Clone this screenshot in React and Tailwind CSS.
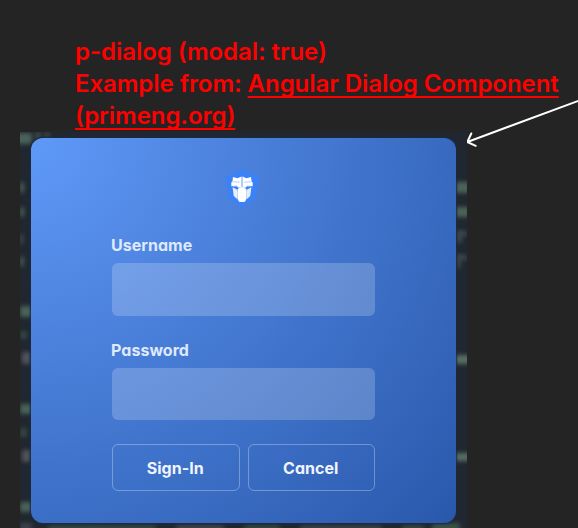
const LEFT_SPOTS = [
  { x: 0, y: 50, w: 4, h: 11, color: '#4b6259' },
  { x: 0, y: 75, w: 4, h: 10, color: '#4b6259' },
  { x: 0, y: 102, w: 3, h: 10, color: '#40544e' },
  { x: 0, y: 124, w: 4, h: 11, color: '#445a52' },
  { x: 0, y: 174, w: 13, h: 11, color: '#4a6258' },
  { x: 0, y: 199, w: 7, h: 8, color: '#344742' },
  { x: 2, y: 220, w: 9, h: 12, color: '#50535c' },
  { x: 0, y: 272, w: 13, h: 10, color: '#4a6258' },
  { x: 0, y: 296, w: 7, h: 9, color: '#344742' },
  { x: 2, y: 318, w: 9, h: 12, color: '#50535c' },
  { x: 0, y: 370, w: 13, h: 10, color: '#4a6258' },
];

const RIGHT_SPOTS = [
  { x: 434, y: 50, w: 16, h: 11, color: '#4b6259' },
  { x: 434, y: 75, w: 16, h: 10, color: '#4b6259' },
  { x: 436, y: 99, w: 6, h: 12, color: '#384a46' },
  { x: 436, y: 99, w: 12, h: 5, color: '#3c464f' },
  { x: 436, y: 123, w: 5, h: 13, color: '#384a46' },
  { x: 436, y: 123, w: 12, h: 5, color: '#3c464f' },
  { x: 432, y: 223, w: 20, h: 9, color: '#566e63' },
  { x: 432, y: 321, w: 20, h: 8, color: '#566e63' },
];

const EDGE_SPOTS = [
  { x: -4, y: 1, w: 16, h: 11, color: '#4b6259' },
  { x: 15, y: 0, w: 6, h: 7, color: '#3d5049' },
  { x: 24, y: 0, w: 6, h: 7, color: '#3a4448' },
  { x: 0, y: 391, w: 12, h: 8, color: '#3a424b' },
  { x: 28, y: 393, w: 108, h: 7, color: '#344841' },
  { x: 156, y: 393, w: 48, h: 7, color: '#41454e' },
  { x: 224, y: 393, w: 36, h: 7, color: '#344841' },
  { x: 280, y: 393, w: 82, h: 7, color: '#3b4049' },
  { x: 382, y: 393, w: 22, h: 7, color: '#344841' },
  { x: 412, y: 391, w: 28, h: 8, color: '#3c5249' },
];

const SPOTS = [...LEFT_SPOTS, ...RIGHT_SPOTS, ...EDGE_SPOTS];

// Out-of-focus page content behind the modal mask.
function Backdrop() {
  return (
    <div aria-hidden="true" className="absolute inset-0 overflow-hidden">
      {SPOTS.map((s, i) => (
        <span
          key={i}
          className="absolute rounded-xs blur-[2px]"
          style={{ left: s.x, top: s.y, width: s.w, height: s.h, background: s.color }}
        />
      ))}
    </div>
  );
}

function Logo() {
  return (
    <svg className="mr-auto ml-[113px] block h-[39px] w-[36px]" viewBox="0 0 36 39">
      <path d="M17 0.5 34 8 30.5 29.5 17 38.5 3.5 29.5 0.5 8Z" fill="#3b82f6" />
      <path d="M8 8 12.5 9.3 16.6 7.5V18.5L13.5 18.8 11.5 16.8 6.3 17.2V13.5L7.4 12.5Z" fill="#fff" />
      <path d="M26 8 21.5 9.3 17.4 7.5V18.5L20.5 18.8 22.5 16.8 27.7 17.2V13.5L26.6 12.5Z" fill="#fff" />
      <path d="M7.6 18.3 11.8 20.5 12.6 23V30.5L8.8 27Z" fill="#e6effe" />
      <path d="M26.4 18.3 22.2 20.5 21.4 23V30.5L25.2 27Z" fill="#e6effe" />
      <path d="M14 19 17 18 20 19 21.6 20.5 21 31 19.6 33H14.4L13 31 12.4 20.5Z" fill="#fff" />
      <path d="M7.5 12.8 14.8 13.2M26.5 12.8 19.2 13.2M8 17.2 11.6 17.6M26 17.2 22.4 17.6" stroke="#9fc3fc" strokeWidth="0.8" />
    </svg>
  );
}

function Field({ label, type }) {
  return (
    <label className="block">
      <span className="-ml-px block h-[25px] text-base leading-[15px] font-bold tracking-[0.04px] text-[#dfe9fc]">{label}</span>
      <input type={type} className="block h-[52.5px] w-full rounded-md bg-white/20 outline-none" />
    </label>
  );
}

function Button({ children }) {
  return (
    <button className="h-[47px] flex-1 rounded-md border border-white/30 pt-px pr-px text-base leading-none font-bold tracking-[0.05px] text-[#eff4fd]">
      {children}
    </button>
  );
}

export default function App() {
  return (
    <main className="relative flex h-[528px] w-[578px] flex-col overflow-hidden bg-[#242424] font-['Inter',sans-serif]">
      <header className="h-[132px] shrink-0 pt-9 pl-[75px] text-[24px] leading-[32px] font-semibold tracking-[-0.05px] whitespace-nowrap text-[#ff0000]">
        <p>p-dialog (modal: true)</p>
        <p>
          Example from:{' '}
          <a className="underline decoration-[1.5px] underline-offset-[4px] [text-decoration-skip-ink:none]">
            Angular Dialog Component
            <br />
            (primeng.org)
          </a>
        </p>
      </header>
      <section className="relative ml-5 h-[396px] w-[447px] shrink-0 overflow-hidden bg-[#212730] pt-1.5 pl-[10.5px]">
        <Backdrop />
        <div
          role="dialog"
          className="relative h-[385px] w-[425.5px] rounded-xl bg-[radial-gradient(circle_at_left_top,#5f99f8,#2958ab)] pr-[81px] pl-[81.5px] pt-[31px] shadow-[0_0_2px_1px_#1d2b40] [font-feature-settings:'cv02','cv03','cv04','cv11']"
        >
          <Logo />
          <form className="mt-[30px] flex flex-col" onSubmit={(e) => e.preventDefault()}>
            <Field label="Username" type="text" />
            <div className="mt-[27px]">
              <Field label="Password" type="password" />
            </div>
            <div className="mt-6 flex gap-2">
              <Button>Sign-In</Button>
              <Button>Cancel</Button>
            </div>
          </form>
        </div>
      </section>
      <svg className="pointer-events-none absolute top-[96px] left-[467px] h-[56px] w-[111px]" viewBox="467 96 111 56" fill="none" stroke="#fff" strokeWidth="2" strokeLinecap="round" strokeLinejoin="round">
        <path d="M579 100.6 467.3 142M471.3 133.5 467.3 142 475.7 145.8" />
      </svg>
    </main>
  );
}
